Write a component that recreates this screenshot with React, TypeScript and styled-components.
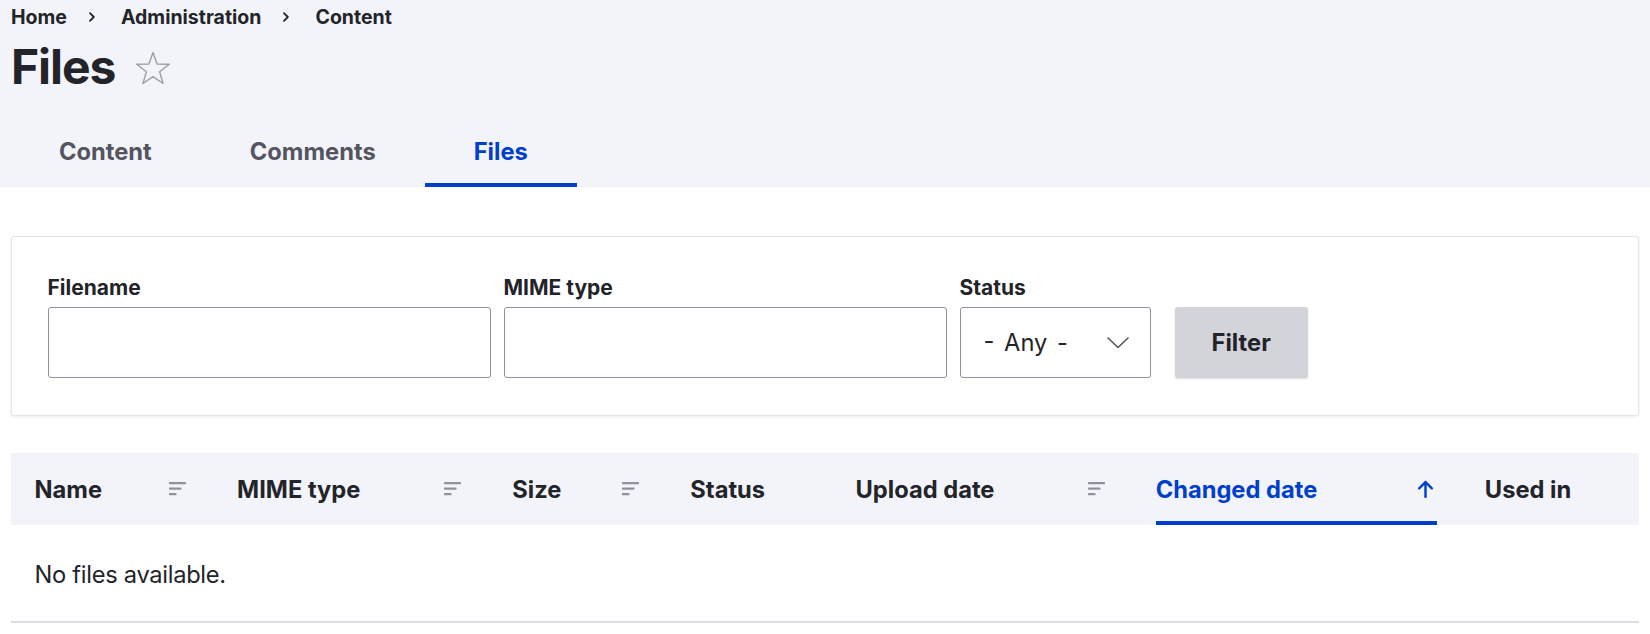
import React from "react";
import styled, { createGlobalStyle } from "styled-components";

const GlobalStyle = createGlobalStyle`
  html, body { margin: 0; padding: 0; background: #ffffff; }
  body {
    font-family: Inter, "Noto Sans", "Liberation Sans", sans-serif;
    color: #232429;
    -webkit-font-smoothing: antialiased;
  }
  * { box-sizing: border-box; }
`;

const Page = styled.div`
  width: 1650px;
`;

const Header = styled.header`
  background: #f3f4f9;
  padding: 0 11px;
`;

const Breadcrumb = styled.nav`
  display: flex;
  align-items: center;
  height: 34px;
  font-size: 19.5px;
  font-weight: 700;
  line-height: 34px;
`;

const Crumb = styled.a`
  color: #232429;
  text-decoration: none;
`;

const Sep = styled.span`
  display: inline-flex;
  margin: 0 26px 0 22px;
  color: #232429;
`;

const TitleRow = styled.div`
  display: flex;
  align-items: center;
  height: 63px;
  margin-top: 1px;
  margin-bottom: 19px;
`;

const Title = styled.h1`
  margin: 0;
  font-size: 48px;
  line-height: 63px;
  font-weight: 700;
  letter-spacing: -1.1px;
  color: #232429;
`;

const StarButton = styled.span`
  display: inline-flex;
  margin-left: 20px;
  margin-top: 3px;
`;

const Tabs = styled.ul`
  display: flex;
  margin: 0 0 0 -1px;
  padding: 0;
  list-style: none;
`;

const TabLink = styled.a<{ $active?: boolean }>`
  display: block;
  height: 70px;
  padding: 4px 49px 0;
  line-height: 62px;
  font-size: 23.7px;
  font-weight: 700;
  text-decoration: none;
  color: ${(p) => (p.$active ? "#003ecc" : "#545560")};
  border-bottom: 4px solid ${(p) => (p.$active ? "#003ecc" : "transparent")};
`;

const Main = styled.main`
  padding: 49px 11px 0 10.5px;
`;

const FilterCard = styled.div`
  border: 1px solid #e3e4ea;
  border-radius: 3px;
  box-shadow: 0 1px 3px rgba(0, 0, 0, 0.08);
  background: #fff;
  padding: 38px 36px 37px;
`;

const Form = styled.form`
  display: flex;
  align-items: flex-end;
  gap: 13px;
`;

const FormItem = styled.div`
  display: flex;
  flex-direction: column;
`;

const Label = styled.label`
  font-size: 21px;
  font-weight: 700;
  line-height: 25px;
  margin-bottom: 7px;
  color: #232429;
`;

const TextInput = styled.input<{ $width: number }>`
  width: ${(p) => p.$width}px;
  height: 71px;
  border: 1px solid #8e929c;
  border-radius: 3px;
  padding: 0 16px;
  font-family: inherit;
  font-size: 23.7px;
  background: #fff;
`;

const SelectWrap = styled.div`
  position: relative;
  width: 191px;
`;

const Select = styled.select`
  appearance: none;
  -webkit-appearance: none;
  width: 100%;
  height: 71px;
  border: 1px solid #8e929c;
  border-radius: 3px;
  padding: 0 23px;
  font-family: inherit;
  font-size: 23.7px;
  word-spacing: 3px;
  color: #232429;
  background: #fff;
`;

const Chevron = styled.span`
  position: absolute;
  right: 22px;
  top: 50%;
  transform: translateY(-50%);
  display: flex;
  pointer-events: none;
`;

const Button = styled.button`
  margin-left: 11px;
  height: 71px;
  padding: 0 37px;
  border: none;
  border-radius: 3px;
  background: #d3d4d9;
  color: #232429;
  font-family: inherit;
  font-size: 23.7px;
  font-weight: 700;
  box-shadow: 0 1px 2px rgba(0, 0, 0, 0.14);
`;

const Table = styled.table`
  margin-top: 37px;
  width: 100%;
  border-collapse: collapse;
  table-layout: fixed;
`;

const Th = styled.th<{ $width: number }>`
  width: ${(p) => p.$width}px;
  height: 72px;
  padding: 0 24px;
  background: #f3f4f9;
  text-align: left;
  vertical-align: top;
`;

const HeadLink = styled.a<{ $active?: boolean }>`
  display: flex;
  align-items: center;
  justify-content: space-between;
  height: 72px;
  padding-top: 4px;
  font-size: 23.7px;
  font-weight: 700;
  text-decoration: none;
  color: ${(p) => (p.$active ? "#003ecc" : "#232429")};
  border-bottom: 4px solid ${(p) => (p.$active ? "#003ecc" : "transparent")};
`;

const EmptyCell = styled.td`
  padding: 32px 24px 29px;
  line-height: 35px;
  font-size: 23.7px;
  letter-spacing: -0.3px;
  color: #232429;
  border-bottom: 2px solid #dcdde3;
`;

const Star = () => (
  <svg width="36" height="35" viewBox="0 0 36 35" fill="none">
    <polygon
      points="18,1.5 22.1,13 34.3,13.3 24.6,20.8 28.1,32.5 18,25.6 7.9,32.5 11.4,20.8 1.7,13.3 13.9,13"
      stroke="#9a9ea8"
      strokeWidth="1.4"
      strokeLinejoin="round"
      fill="none"
    />
  </svg>
);

const CrumbSep = () => (
  <svg width="6" height="10" viewBox="0 0 6 10">
    <path d="M1 1.2 L4.8 5 L1 8.8" stroke="#232429" strokeWidth="1.8" fill="none" strokeLinecap="round" strokeLinejoin="round" />
  </svg>
);

const SortIcon = () => (
  <svg width="20" height="14" viewBox="0 0 20 14">
    <rect x="0" y="0" width="17" height="2.2" rx="0.6" fill="#8e929c" />
    <rect x="0" y="5.5" width="12.5" height="2.2" rx="0.6" fill="#8e929c" />
    <rect x="0" y="11" width="7.5" height="2.2" rx="0.6" fill="#8e929c" />
  </svg>
);

const ArrowUp = () => (
  <svg width="20" height="18" viewBox="0 0 20 18">
    <path d="M8.5 17 V2 M2.2 8.3 L8.5 2 L14.8 8.3" stroke="#003ecc" strokeWidth="2.4" fill="none" strokeLinecap="round" strokeLinejoin="round" />
  </svg>
);

const ChevronDown = () => (
  <svg width="22" height="12" viewBox="0 0 22 12">
    <path d="M1 1 L11 10.5 L21 1" stroke="#545560" strokeWidth="1.6" fill="none" strokeLinecap="round" strokeLinejoin="round" />
  </svg>
);

type Col = { label: string; width: number; sort?: "icon" | "active" };

const columns: Col[] = [
  { label: "Name", width: 202.5, sort: "icon" },
  { label: "MIME type", width: 275, sort: "icon" },
  { label: "Size", width: 178, sort: "icon" },
  { label: "Status", width: 165 },
  { label: "Upload date", width: 300, sort: "icon" },
  { label: "Changed date", width: 329, sort: "active" },
  { label: "Used in", width: 178 },
];

export default function App() {
  return (
    <Page>
      <GlobalStyle />
      <Header>
        <Breadcrumb>
          <Crumb href="#">Home</Crumb>
          <Sep><CrumbSep /></Sep>
          <Crumb href="#">Administration</Crumb>
          <Sep><CrumbSep /></Sep>
          <Crumb href="#">Content</Crumb>
        </Breadcrumb>
        <TitleRow>
          <Title>Files</Title>
          <StarButton><Star /></StarButton>
        </TitleRow>
        <Tabs>
          <li><TabLink href="#">Content</TabLink></li>
          <li><TabLink href="#">Comments</TabLink></li>
          <li><TabLink href="#" $active>Files</TabLink></li>
        </Tabs>
      </Header>
      <Main>
        <FilterCard>
          <Form onSubmit={(e) => e.preventDefault()}>
            <FormItem>
              <Label htmlFor="filename">Filename</Label>
              <TextInput id="filename" $width={443} />
            </FormItem>
            <FormItem>
              <Label htmlFor="mime">MIME type</Label>
              <TextInput id="mime" $width={443} />
            </FormItem>
            <FormItem>
              <Label htmlFor="status">Status</Label>
              <SelectWrap>
                <Select id="status" defaultValue="any">
                  <option value="any">- Any -</option>
                </Select>
                <Chevron><ChevronDown /></Chevron>
              </SelectWrap>
            </FormItem>
            <Button type="submit">Filter</Button>
          </Form>
        </FilterCard>
        <Table>
          <thead>
            <tr>
              {columns.map((c) => (
                <Th key={c.label} $width={c.width}>
                  <HeadLink href="#" $active={c.sort === "active"}>
                    <span>{c.label}</span>
                    {c.sort === "icon" && <SortIcon />}
                    {c.sort === "active" && <ArrowUp />}
                  </HeadLink>
                </Th>
              ))}
            </tr>
          </thead>
          <tbody>
            <tr>
              <EmptyCell colSpan={7}>No files available.</EmptyCell>
            </tr>
          </tbody>
        </Table>
      </Main>
    </Page>
  );
}
